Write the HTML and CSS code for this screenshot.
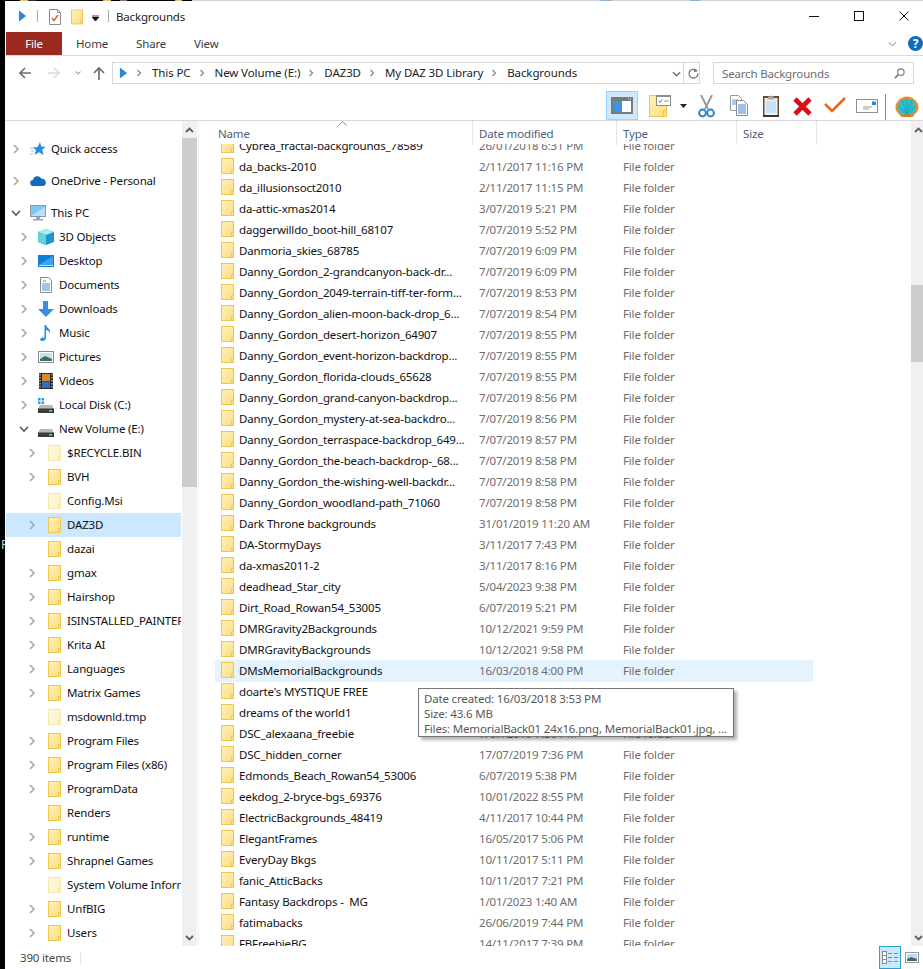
FILE: index.html
```html
<!DOCTYPE html>
<html lang="en">
<head>
<meta charset="utf-8">
<title>Backgrounds</title>
<link rel="stylesheet" href="styles.css">
</head>
<body>
<svg class="defs" aria-hidden="true">
  <defs>
    <linearGradient id="fg" x1="0" y1="0" x2="1" y2="1"><stop offset="0" stop-color="#fff0bd"/><stop offset="1" stop-color="#fedd7c"/></linearGradient>
    <symbol id="folder" viewBox="0 0 13 16">
      <rect x=".5" y=".5" width="12" height="15" fill="url(#fg)" stroke="#eec650"/>
      <path d="M10.5 15.5v-4h2" fill="none" stroke="#eec650"/>
    </symbol>
    <symbol id="chev-r" viewBox="0 0 10 10"><path d="M3 1l4 4-4 4" fill="none" stroke="#a6a6a6" stroke-width="1.6"/></symbol>
    <symbol id="chev-d" viewBox="0 0 10 10"><path d="M1 3l4 4 4-4" fill="none" stroke="#595959" stroke-width="1.6"/></symbol>
    <symbol id="crumb" viewBox="0 0 6 8"><path d="M1.5 1l3 3-3 3" fill="none" stroke="#8a8a8a" stroke-width="1.3"/></symbol>
    <symbol id="play" viewBox="0 0 10 12"><path d="M1 0l8 6-8 6z" fill="#2b88d8"/></symbol>
    <symbol id="star" viewBox="0 0 16 16"><path d="M10 1l1.300 4.500 4.500.3-3.500 3 1.200 5.200-4.500-2.800-4.500 2.800 1.500-5-3-2.500 4.600-.5z" fill="#2b8fe0"/><path d="M0 7h4M1 10h3M0 13h3" stroke="#9cc9ee"/></symbol>
    <symbol id="cloud" viewBox="0 0 16 11"><path d="M3.500 10.500a3 3 0 0 1-.5-6 4.500 4.500 0 0 1 8.500-1.200 3.600 3.600 0 0 1 4.300 3.900 3 3 0 0 1-2.300 3.300z" fill="#0f6cbd"/></symbol>
    <symbol id="pc" viewBox="0 0 16 16"><rect x=".5" y=".5" width="15" height="11" fill="#7fc7f5" stroke="#8a99a8"/><path d="M1 11L15 2v9z" fill="#b7e1fa"/><path d="M6 12h4v2H6zM3 14h10v1.500H3z" fill="#9aa5ae"/></symbol>
    <symbol id="cube" viewBox="0 0 16 16"><path d="M8 0l8 3v10l-8 3-8-3V3z" fill="#1e96c8"/><path d="M0 3l8 3 8-3-8-3z" fill="#a8ecec"/><path d="M0 3l8 3v10l-8-3z" fill="#62d3d8"/></symbol>
    <symbol id="desk" viewBox="0 0 16 12"><rect width="16" height="12" fill="#0f7fd6"/><path d="M1 10L15 1v9z" fill="#3fa3ec"/><path d="M1 10.500h14" stroke="#bfe3fb"/></symbol>
    <symbol id="docs" viewBox="0 0 12 16"><path d="M.5.500h8l3 3v12H.5z" fill="#fff" stroke="#8a8a8a"/><path d="M3 4h3M2 7h8M2 9h8M2 11h8M2 13h8" stroke="#3d8edb"/></symbol>
    <symbol id="down" viewBox="0 0 16 16"><path d="M5 0h5v8h6l-8 8-8-8h5z" fill="#3b8fdf"/></symbol>
    <symbol id="note" viewBox="0 0 12 16"><path d="M4.500 0h1.500c.5 3 5 3.500 4 8-1-2-2.500-3-4-3v8c0 2-2 3-4 3s-2.500-2-1-3 2.500-.5 3.500-.2z" fill="#1593e8"/></symbol>
    <symbol id="pics" viewBox="0 0 16 12"><rect x=".5" y=".5" width="15" height="11" fill="#fff" stroke="#8a8a8a"/><rect x="2" y="2" width="12" height="8" fill="#c6e0f3"/><path d="M2 8l5-3 7 3v2H2z" fill="#41705f"/></symbol>
    <symbol id="film" viewBox="0 0 14 16"><rect width="14" height="16" fill="#2b2b2b"/><rect x="3" y="1" width="8" height="7" fill="#d9882a"/><rect x="3" y="8.500" width="8" height="6.500" fill="#2f6fc0"/><path d="M1 1v14M13 1v14" stroke="#ddd" stroke-dasharray="1.500 1.500"/></symbol>
    <symbol id="disk" viewBox="0 0 16 8"><path d="M2 0h12l2 4H0z" fill="#b9b9b9"/><rect y="3.500" width="16" height="4.500" fill="#3c3c3c"/><rect x="11" y="5" width="3" height="1.500" fill="#6fdc6f"/></symbol>
    <symbol id="win" viewBox="0 0 6 6"><path d="M0 0h2.500v2.500H0zM3.500 0H6v2.500H3.500zM0 3.500h2.500V6H0zM3.500 3.500H6V6H3.500z" fill="#1ba1e2"/></symbol>
  </defs>
</svg>

<div class="shell">
  <span class="stray">P</span>
  <div class="window">
    <div class="strip"></div>

    <header class="titlebar">
      <svg class="qa-play"><use href="#play"/></svg>
      <span class="vsep"></span>
      <svg class="qa-doc" viewBox="0 0 12 16"><path d="M.5.500h8l3 3v12H.5z" fill="#fff" stroke="#8b8b8b"/><path d="M8.500.500v3h3" fill="none" stroke="#8b8b8b"/><path d="M3 9l2 2.500L9 6" fill="none" stroke="#e0622a" stroke-width="1.500"/></svg>
      <svg class="qa-folder"><use href="#folder"/></svg>
      <svg class="qa-drop" viewBox="0 0 7 6"><path d="M0 0h7M0 2h7L3.500 6z" stroke="#111" stroke-width=".8" fill="#111"/></svg>
      <span class="vsep second"></span>
      <span class="title">Backgrounds</span>
      <div class="winctl">
        <svg viewBox="0 0 10 10"><path d="M0 5.500h10" stroke="#111"/></svg>
        <svg viewBox="0 0 10 10"><rect x=".5" y=".5" width="9" height="9" fill="none" stroke="#111"/></svg>
        <svg viewBox="0 0 10 10"><path d="M.5.500l9 9M9.500.500l-9 9" stroke="#111"/></svg>
      </div>
    </header>

    <nav class="tabs">
      <span class="tab file">File</span>
      <span class="tab home">Home</span>
      <span class="tab share">Share</span>
      <span class="tab view">View</span>
      <svg class="rib-chev" viewBox="0 0 10 6"><path d="M1 1l4 4 4-4" fill="none" stroke="#a9a9a9" stroke-width="1.200"/></svg>
      <span class="help">?</span>
    </nav>

    <div class="addrbar">
      <svg class="nav-btn back" viewBox="0 0 12 12"><path d="M6 1L1 6l5 5M1 6h11" fill="none" stroke="#6d6d6d" stroke-width="1.600"/></svg>
      <svg class="nav-btn fwd" viewBox="0 0 12 12"><path d="M6 1l5 5-5 5M11 6H0" fill="none" stroke="#dcdcdc" stroke-width="1.600"/></svg>
      <svg class="nav-btn recent" viewBox="0 0 6 4"><path d="M.5.500L3 3 5.500.500" fill="none" stroke="#a9a9a9" stroke-width="1.100"/></svg>
      <svg class="nav-btn up" viewBox="0 0 12 13"><path d="M1 6l5-5 5 5M6 1v12" fill="none" stroke="#6d6d6d" stroke-width="1.700"/></svg>
      <div class="addr">
        <svg class="addr-play"><use href="#play"/></svg>
        <svg class="crumb c1"><use href="#crumb"/></svg><span class="seg">This PC</span>
        <svg class="crumb"><use href="#crumb"/></svg><span class="seg">New Volume (E:)</span>
        <svg class="crumb"><use href="#crumb"/></svg><span class="seg">DAZ3D</span>
        <svg class="crumb"><use href="#crumb"/></svg><span class="seg">My DAZ 3D Library</span>
        <svg class="crumb"><use href="#crumb"/></svg><span class="seg">Backgrounds</span>
        <svg class="addr-drop" viewBox="0 0 10 6"><path d="M1 1l4 4 4-4" fill="none" stroke="#6d6d6d" stroke-width="1.500"/></svg>
        <span class="addr-sep"></span>
        <svg class="refresh" viewBox="0 0 12 12"><path d="M9.800 3.200A4.800 4.800 0 1 0 10.800 6" fill="none" stroke="#6d6d6d" stroke-width="1.300"/><path d="M6.500 0v4h3.500z" fill="#6d6d6d"/></svg>
      </div>
      <div class="search">
        <span>Search Backgrounds</span>
        <svg viewBox="0 0 12 12"><circle cx="7.500" cy="4.500" r="3.500" fill="none" stroke="#777" stroke-width="1.200"/><path d="M5 7l-4 4" stroke="#777" stroke-width="1.800"/></svg>
      </div>
    </div>

    <div class="toolbar">
      <div class="tb-sel">
        <svg viewBox="0 0 22 17"><rect width="22" height="17" fill="#7a7a7a"/><rect x="2" y="4" width="9" height="11" fill="#3f93e0"/><rect x="11" y="4" width="9" height="11" fill="#fff"/><path d="M17 2h1M19 2h1" stroke="#ddd"/></svg>
      </div>
      <svg class="tb-fold" viewBox="0 0 22 22"><rect x=".5" y=".5" width="17" height="21" fill="url(#fg)" stroke="#eec650"/><path d="M14.500 21.500v-6h3" fill="none" stroke="#eec650"/><rect x="7.500" y=".5" width="14" height="10" fill="#fff" stroke="#8b8b8b"/><path d="M7 0h15v2H7z" fill="#8b8b8b"/><path d="M9.500 6l1.500 1.500L13 4.500" fill="none" stroke="#2b88d8"/><path d="M15 6h5" stroke="#999"/></svg>
      <svg class="tb-drop" viewBox="0 0 7 4"><path d="M0 0h7L3.500 4z" fill="#222"/></svg>
      <svg class="tb-cut" viewBox="0 0 17 23"><path d="M3 0l7 14M14 0L7 14" stroke="#9a9a9a" stroke-width="2"/><circle cx="4.500" cy="18" r="3.400" fill="none" stroke="#2a86d0" stroke-width="2"/><circle cx="12.500" cy="18" r="3.400" fill="none" stroke="#2a86d0" stroke-width="2"/></svg>
      <svg class="tb-copy" viewBox="0 0 18 21"><path d="M.5.500h8l3 3v12H.5z" fill="#fff" stroke="#9a9a9a"/><path d="M2 5h6M2 7h7M2 9h7" stroke="#5b94d8"/><path d="M6.500 5.500h7l4 4v11h-11z" fill="#fff" stroke="#8b8b8b"/><path d="M8 10h8M8 12h8M8 14h8M8 16h8M8 18h8" stroke="#3d7fd6"/></svg>
      <svg class="tb-paste" viewBox="0 0 16 22"><rect width="16" height="21" y="1" fill="#6b4a2e"/><path d="M0 20h16v2H0z" fill="#4a3220"/><rect x="1.500" y="3" width="13" height="17" fill="#e6f2fb"/><path d="M3 7h10M3 9h10M3 11h10M3 13h10M3 15h10M3 17h10" stroke="#a9cfee"/><path d="M5 3V1.500h2L8 0l1 1.500h2V3l1 1.500H4z" fill="#a9a9a9"/></svg>
      <svg class="tb-del" viewBox="0 0 19 19"><path d="M2 2l15 15M17 2L2 17" stroke="#e00b16" stroke-width="4.600"/></svg>
      <svg class="tb-ok" viewBox="0 0 22 16"><path d="M1 7l7 7L21 1" fill="none" stroke="#f0651a" stroke-width="2.600"/></svg>
      <svg class="tb-mail" viewBox="0 0 22 14"><rect x=".5" y=".5" width="21" height="13" fill="#fff" stroke="#8f8f8f"/><rect x="16" y="2.500" width="4" height="3.500" fill="#2b88d8"/><path d="M7 8h9M7 10h6" stroke="#9a9a9a"/></svg>
      <span class="tb-sep"></span>
      <svg class="tb-shell" viewBox="0 0 24 22"><path d="M6 21l-2-3C0 15-1 9 3 5c5-6 13-6 18 0 4 4 3 10-1 13l-2 3z" fill="#f08a24"/><path d="M6.500 18.500C2.500 15 1.500 10 4.500 6.500c4-5 11-5 15 0 3 3.500 2 8.500-2 12z" fill="#2cc0cc"/><path d="M12 18L7 4M12 18L3.500 10M12 18L12 3M12 18L17 4M12 18L20.500 10" stroke="#1a97a8" stroke-width=".7"/><path d="M8 18.500h8V21H8z" fill="#d9762a"/></svg>
    </div>

    <main class="main">
      <aside class="nav">
        <div class="tree">
          <div class="node d0"><svg class="chev"><use href="#chev-r"/></svg><svg class="ico"><use href="#star"/></svg><span>Quick access</span></div>
          <div class="node d0 gap"><svg class="chev"><use href="#chev-r"/></svg><svg class="ico"><use href="#cloud"/></svg><span>OneDrive - Personal</span></div>
          <div class="node d0 gap"><svg class="chev"><use href="#chev-d"/></svg><svg class="ico"><use href="#pc"/></svg><span>This PC</span></div>
          <div class="node d1"><svg class="chev"><use href="#chev-r"/></svg><svg class="ico"><use href="#cube"/></svg><span>3D Objects</span></div>
          <div class="node d1"><svg class="chev"><use href="#chev-r"/></svg><svg class="ico"><use href="#desk"/></svg><span>Desktop</span></div>
          <div class="node d1"><svg class="chev"><use href="#chev-r"/></svg><svg class="ico"><use href="#docs"/></svg><span>Documents</span></div>
          <div class="node d1"><svg class="chev"><use href="#chev-r"/></svg><svg class="ico"><use href="#down"/></svg><span>Downloads</span></div>
          <div class="node d1"><svg class="chev"><use href="#chev-r"/></svg><svg class="ico"><use href="#note"/></svg><span>Music</span></div>
          <div class="node d1"><svg class="chev"><use href="#chev-r"/></svg><svg class="ico"><use href="#pics"/></svg><span>Pictures</span></div>
          <div class="node d1"><svg class="chev"><use href="#chev-r"/></svg><svg class="ico"><use href="#film"/></svg><span>Videos</span></div>
          <div class="node d1"><svg class="chev"><use href="#chev-r"/></svg><span class="drive"><svg class="winflag"><use href="#win"/></svg><svg class="drive-body"><use href="#disk"/></svg></span><span>Local Disk (C:)</span></div>
          <div class="node d1"><svg class="chev"><use href="#chev-d"/></svg><span class="drive"><svg class="drive-body"><use href="#disk"/></svg></span><span>New Volume (E:)</span></div>
          <div class="node d2"><svg class="chev"><use href="#chev-r"/></svg><svg class="ico faded"><use href="#folder"/></svg><span>$RECYCLE.BIN</span></div>
          <div class="node d2"><svg class="chev"><use href="#chev-r"/></svg><svg class="ico"><use href="#folder"/></svg><span>BVH</span></div>
          <div class="node d2"><span class="chev"></span><svg class="ico faded"><use href="#folder"/></svg><span>Config.Msi</span></div>
          <div class="node d2 selected"><svg class="chev"><use href="#chev-r"/></svg><svg class="ico"><use href="#folder"/></svg><span>DAZ3D</span></div>
          <div class="node d2"><span class="chev"></span><svg class="ico"><use href="#folder"/></svg><span>dazai</span></div>
          <div class="node d2"><svg class="chev"><use href="#chev-r"/></svg><svg class="ico"><use href="#folder"/></svg><span>gmax</span></div>
          <div class="node d2"><svg class="chev"><use href="#chev-r"/></svg><svg class="ico"><use href="#folder"/></svg><span>Hairshop</span></div>
          <div class="node d2"><svg class="chev"><use href="#chev-r"/></svg><svg class="ico"><use href="#folder"/></svg><span>ISINSTALLED_PAINTER</span></div>
          <div class="node d2"><svg class="chev"><use href="#chev-r"/></svg><svg class="ico"><use href="#folder"/></svg><span>Krita AI</span></div>
          <div class="node d2"><svg class="chev"><use href="#chev-r"/></svg><svg class="ico"><use href="#folder"/></svg><span>Languages</span></div>
          <div class="node d2"><svg class="chev"><use href="#chev-r"/></svg><svg class="ico"><use href="#folder"/></svg><span>Matrix Games</span></div>
          <div class="node d2"><span class="chev"></span><svg class="ico faded"><use href="#folder"/></svg><span>msdownld.tmp</span></div>
          <div class="node d2"><svg class="chev"><use href="#chev-r"/></svg><svg class="ico"><use href="#folder"/></svg><span>Program Files</span></div>
          <div class="node d2"><svg class="chev"><use href="#chev-r"/></svg><svg class="ico"><use href="#folder"/></svg><span>Program Files (x86)</span></div>
          <div class="node d2"><svg class="chev"><use href="#chev-r"/></svg><svg class="ico"><use href="#folder"/></svg><span>ProgramData</span></div>
          <div class="node d2"><span class="chev"></span><svg class="ico"><use href="#folder"/></svg><span>Renders</span></div>
          <div class="node d2"><svg class="chev"><use href="#chev-r"/></svg><svg class="ico"><use href="#folder"/></svg><span>runtime</span></div>
          <div class="node d2"><svg class="chev"><use href="#chev-r"/></svg><svg class="ico"><use href="#folder"/></svg><span>Shrapnel Games</span></div>
          <div class="node d2"><span class="chev"></span><svg class="ico faded"><use href="#folder"/></svg><span>System Volume Information</span></div>
          <div class="node d2"><svg class="chev"><use href="#chev-r"/></svg><svg class="ico"><use href="#folder"/></svg><span>UnfBIG</span></div>
          <div class="node d2"><svg class="chev"><use href="#chev-r"/></svg><svg class="ico"><use href="#folder"/></svg><span>Users</span></div>
        </div>
        <div class="vscroll wide">
          <svg class="sb-arrow" viewBox="0 0 9 6"><path d="M1 5l3.500-3.500L8 5" fill="none" stroke="#606060" stroke-width="1.800"/></svg>
          <div class="thumb nav-thumb"></div>
          <svg class="sb-arrow end" viewBox="0 0 9 6"><path d="M1 1l3.500 3.500L8 1" fill="none" stroke="#606060" stroke-width="1.800"/></svg>
        </div>
      </aside>

      <section class="files">
        <div class="colhead">
          <svg class="sort" viewBox="0 0 9 5"><path d="M.5 4.500l4-4 4 4" fill="none" stroke="#8a8a8a"/></svg>
          <span class="col c-name">Name</span>
          <span class="col c-date">Date modified</span>
          <span class="col c-type">Type</span>
          <span class="col c-size">Size</span>
        </div>
        <div class="rows">
          <div class="rows-inner">
            <div class="row"><svg class="fico"><use href="#folder"/></svg><span class="name">Cybrea_fractal-backgrounds_78589</span><span class="date">26/01/2018 6:31 PM</span><span class="type">File folder</span></div>
            <div class="row"><svg class="fico"><use href="#folder"/></svg><span class="name">da_backs-2010</span><span class="date">2/11/2017 11:16 PM</span><span class="type">File folder</span></div>
            <div class="row"><svg class="fico"><use href="#folder"/></svg><span class="name">da_illusionsoct2010</span><span class="date">2/11/2017 11:15 PM</span><span class="type">File folder</span></div>
            <div class="row"><svg class="fico"><use href="#folder"/></svg><span class="name">da-attic-xmas2014</span><span class="date">3/07/2019 5:21 PM</span><span class="type">File folder</span></div>
            <div class="row"><svg class="fico"><use href="#folder"/></svg><span class="name">daggerwilldo_boot-hill_68107</span><span class="date">7/07/2019 5:52 PM</span><span class="type">File folder</span></div>
            <div class="row"><svg class="fico"><use href="#folder"/></svg><span class="name">Danmoria_skies_68785</span><span class="date">7/07/2019 6:09 PM</span><span class="type">File folder</span></div>
            <div class="row"><svg class="fico"><use href="#folder"/></svg><span class="name">Danny_Gordon_2-grandcanyon-back-dr...</span><span class="date">7/07/2019 6:09 PM</span><span class="type">File folder</span></div>
            <div class="row"><svg class="fico"><use href="#folder"/></svg><span class="name">Danny_Gordon_2049-terrain-tiff-ter-form...</span><span class="date">7/07/2019 8:53 PM</span><span class="type">File folder</span></div>
            <div class="row"><svg class="fico"><use href="#folder"/></svg><span class="name">Danny_Gordon_alien-moon-back-drop_6...</span><span class="date">7/07/2019 8:54 PM</span><span class="type">File folder</span></div>
            <div class="row"><svg class="fico"><use href="#folder"/></svg><span class="name">Danny_Gordon_desert-horizon_64907</span><span class="date">7/07/2019 8:55 PM</span><span class="type">File folder</span></div>
            <div class="row"><svg class="fico"><use href="#folder"/></svg><span class="name">Danny_Gordon_event-horizon-backdrop...</span><span class="date">7/07/2019 8:55 PM</span><span class="type">File folder</span></div>
            <div class="row"><svg class="fico"><use href="#folder"/></svg><span class="name">Danny_Gordon_florida-clouds_65628</span><span class="date">7/07/2019 8:55 PM</span><span class="type">File folder</span></div>
            <div class="row"><svg class="fico"><use href="#folder"/></svg><span class="name">Danny_Gordon_grand-canyon-backdrop...</span><span class="date">7/07/2019 8:56 PM</span><span class="type">File folder</span></div>
            <div class="row"><svg class="fico"><use href="#folder"/></svg><span class="name">Danny_Gordon_mystery-at-sea-backdro...</span><span class="date">7/07/2019 8:56 PM</span><span class="type">File folder</span></div>
            <div class="row"><svg class="fico"><use href="#folder"/></svg><span class="name">Danny_Gordon_terraspace-backdrop_649...</span><span class="date">7/07/2019 8:57 PM</span><span class="type">File folder</span></div>
            <div class="row"><svg class="fico"><use href="#folder"/></svg><span class="name">Danny_Gordon_the-beach-backdrop-_68...</span><span class="date">7/07/2019 8:58 PM</span><span class="type">File folder</span></div>
            <div class="row"><svg class="fico"><use href="#folder"/></svg><span class="name">Danny_Gordon_the-wishing-well-backdr...</span><span class="date">7/07/2019 8:58 PM</span><span class="type">File folder</span></div>
            <div class="row"><svg class="fico"><use href="#folder"/></svg><span class="name">Danny_Gordon_woodland-path_71060</span><span class="date">7/07/2019 8:58 PM</span><span class="type">File folder</span></div>
            <div class="row"><svg class="fico"><use href="#folder"/></svg><span class="name">Dark Throne backgrounds</span><span class="date">31/01/2019 11:20 AM</span><span class="type">File folder</span></div>
            <div class="row"><svg class="fico"><use href="#folder"/></svg><span class="name">DA-StormyDays</span><span class="date">3/11/2017 7:43 PM</span><span class="type">File folder</span></div>
            <div class="row"><svg class="fico"><use href="#folder"/></svg><span class="name">da-xmas2011-2</span><span class="date">3/11/2017 8:16 PM</span><span class="type">File folder</span></div>
            <div class="row"><svg class="fico"><use href="#folder"/></svg><span class="name">deadhead_Star_city</span><span class="date">5/04/2023 9:38 PM</span><span class="type">File folder</span></div>
            <div class="row"><svg class="fico"><use href="#folder"/></svg><span class="name">Dirt_Road_Rowan54_53005</span><span class="date">6/07/2019 5:21 PM</span><span class="type">File folder</span></div>
            <div class="row"><svg class="fico"><use href="#folder"/></svg><span class="name">DMRGravity2Backgrounds</span><span class="date">10/12/2021 9:59 PM</span><span class="type">File folder</span></div>
            <div class="row"><svg class="fico"><use href="#folder"/></svg><span class="name">DMRGravityBackgrounds</span><span class="date">10/12/2021 9:58 PM</span><span class="type">File folder</span></div>
            <div class="row hover"><svg class="fico"><use href="#folder"/></svg><span class="name">DMsMemorialBackgrounds</span><span class="date">16/03/2018 4:00 PM</span><span class="type">File folder</span></div>
            <div class="row"><svg class="fico"><use href="#folder"/></svg><span class="name">doarte's MYSTIQUE FREE</span><span class="date">1/11/2017 8:01 PM</span><span class="type">File folder</span></div>
            <div class="row"><svg class="fico"><use href="#folder"/></svg><span class="name">dreams of the world1</span><span class="date">3/11/2017 8:05 PM</span><span class="type">File folder</span></div>
            <div class="row"><svg class="fico"><use href="#folder"/></svg><span class="name">DSC_alexaana_freebie</span><span class="date">7/07/2019 7:30 PM</span><span class="type">File folder</span></div>
            <div class="row"><svg class="fico"><use href="#folder"/></svg><span class="name">DSC_hidden_corner</span><span class="date">17/07/2019 7:36 PM</span><span class="type">File folder</span></div>
            <div class="row"><svg class="fico"><use href="#folder"/></svg><span class="name">Edmonds_Beach_Rowan54_53006</span><span class="date">6/07/2019 5:38 PM</span><span class="type">File folder</span></div>
            <div class="row"><svg class="fico"><use href="#folder"/></svg><span class="name">eekdog_2-bryce-bgs_69376</span><span class="date">10/01/2022 8:55 PM</span><span class="type">File folder</span></div>
            <div class="row"><svg class="fico"><use href="#folder"/></svg><span class="name">ElectricBackgrounds_48419</span><span class="date">4/11/2017 10:44 PM</span><span class="type">File folder</span></div>
            <div class="row"><svg class="fico"><use href="#folder"/></svg><span class="name">ElegantFrames</span><span class="date">16/05/2017 5:06 PM</span><span class="type">File folder</span></div>
            <div class="row"><svg class="fico"><use href="#folder"/></svg><span class="name">EveryDay Bkgs</span><span class="date">10/11/2017 5:11 PM</span><span class="type">File folder</span></div>
            <div class="row"><svg class="fico"><use href="#folder"/></svg><span class="name">fanic_AtticBacks</span><span class="date">10/11/2017 7:21 PM</span><span class="type">File folder</span></div>
            <div class="row"><svg class="fico"><use href="#folder"/></svg><span class="name">Fantasy Backdrops -&nbsp; MG</span><span class="date">1/01/2023 1:40 AM</span><span class="type">File folder</span></div>
            <div class="row"><svg class="fico"><use href="#folder"/></svg><span class="name">fatimabacks</span><span class="date">26/06/2019 7:44 PM</span><span class="type">File folder</span></div>
            <div class="row"><svg class="fico"><use href="#folder"/></svg><span class="name">FBFreebieBG</span><span class="date">14/11/2017 7:39 PM</span><span class="type">File folder</span></div>
          </div>
        </div>
        <div class="tooltip">
          <div>Date created: 16/03/2018 3:53 PM</div>
          <div>Size: 43.6 MB</div>
          <div>Files: MemorialBack01 24x16.png, MemorialBack01.jpg, ...</div>
        </div>
      </section>

      <div class="vscroll narrow">
        <svg class="sb-arrow" viewBox="0 0 9 6"><path d="M1 5l3.500-3.500L8 5" fill="none" stroke="#606060" stroke-width="1.800"/></svg>
        <div class="thumb list-thumb"></div>
        <svg class="sb-arrow end" viewBox="0 0 9 6"><path d="M1 1l3.500 3.500L8 1" fill="none" stroke="#606060" stroke-width="1.800"/></svg>
      </div>
    </main>

    <footer class="status">
      <span class="count">390 items</span>
      <span class="st-sep"></span>
      <div class="views">
        <div class="view-btn active">
          <svg viewBox="0 0 16 13"><rect x=".5" y=".5" width="4" height="4" fill="#fff" stroke="#8a8a8a"/><rect x=".5" y="4.500" width="4" height="4" fill="#fff" stroke="#8a8a8a"/><rect x=".5" y="8.500" width="4" height="4" fill="#fff" stroke="#8a8a8a"/><path d="M6 2.500h4M12 2.500h4M6 6.500h4M12 6.500h4M6 10.500h4M12 10.500h4" stroke="#8a8a8a"/></svg>
        </div>
        <svg class="view-thumb" viewBox="0 0 14 11"><rect x=".5" y=".5" width="13" height="10" fill="#fff" stroke="#9a9a9a"/><rect x="2" y="2" width="10" height="7" fill="#bcdcf3"/><path d="M2 7l4-2 6 2v2H2z" fill="#41705f"/></svg>
      </div>
    </footer>
  </div>
</div>
</body>
</html>
```

FILE: styles.css
```css
* { box-sizing: border-box; }
html, body { margin: 0; padding: 0; }
body {
  width: 923px;
  height: 969px;
  overflow: hidden;
  font-family: "Noto Sans", "Open Sans", sans-serif;
  font-size: 11.5px;
  letter-spacing: -.17px;
  color: #000;
  background: #000;
}
svg { display: block; flex: none; }
.defs { width: 0; height: 0; }

.shell { display: flex; height: 969px; position: relative; }
.stray {
  position: absolute; left: 1px; top: 537px; width: 5px; overflow: hidden;
  color: #ccc; font-size: 12px; line-height: 16px;
}
.window {
  margin-left: 5px; width: 918px; height: 969px;
  display: flex; flex-direction: column; background: #fff;
  position: relative;
}
.strip {
  height: 1px; margin-left: -5px; flex: none; width: 923px;
  background: linear-gradient(90deg,
    #000 20px, #e5c877 20px 28px, #333 28px 36px, #000 36px 103px,
    #e5c877 103px 111px, #000 111px 120px, #777 120px 127px, #000 127px 175px,
    #e5c877 175px 182px, #000 182px 192px, #d4d4d4 192px 600px, #8fb3d0 600px 612px,
    #d4d4d4 612px 690px, #8fb3d0 690px 700px, #d4d4d4 700px);
}

/* Title bar */
.titlebar { height: 31px; flex: none; display: flex; align-items: center; padding-left: 13px; }
.qa-play { width: 9px; height: 12px; margin-top: -1px; }
.vsep { width: 1px; height: 12px; background: #a9a9a9; margin-left: 10px; margin-top: -1px; }
.qa-doc { width: 12px; height: 16px; margin-left: 11px; margin-top: 1px; }
.qa-folder { width: 12px; height: 16px; margin-left: 10px; margin-top: 1px; }
.qa-drop { width: 7px; height: 6px; margin-left: 9px; margin-top: 2px; }
.vsep.second { margin-left: 9px; }
.title { margin-left: 7px; margin-top: 1px; line-height: 16px; color: #222; }
.winctl { margin-left: auto; display: flex; gap: 35px; padding-right: 14px; margin-top: -1px; }
.winctl svg { width: 10px; height: 10px; }

/* Ribbon tabs */
.tabs {
  height: 24px; flex: none; display: flex; align-items: center;
  border-bottom: 1px solid #dadbdc; color: #3b3b3b; position: relative;
}
.tab { line-height: 16px; }
.file {
  width: 56px; height: 23px; margin-left: 1px; background: #9b2a20; color: #fff;
  display: flex; align-items: center; justify-content: center;
}
.home { margin-left: 14px; }
.share { margin-left: 28px; }
.view { margin-left: 28px; }
.rib-chev { width: 9px; height: 6px; margin-left: auto; }
.help {
  width: 15px; height: 15px; border-radius: 50%; background: #0f6cbd; color: #fff;
  font-weight: 700; font-size: 12px; line-height: 15px; text-align: center;
  margin-left: 11px;
}

/* Address bar */
.addrbar { height: 34px; flex: none; display: flex; align-items: flex-start; padding-top: 6px; }
.nav-btn { margin-top: 5px; }
.back { width: 12px; height: 12px; margin-left: 14px; }
.fwd { width: 12px; height: 12px; margin-left: 17px; }
.recent { width: 6px; height: 4px; margin-left: 15px; margin-top: 9px; }
.up { width: 12px; height: 13px; margin-left: 12px; }
.addr {
  width: 588px; height: 22px; margin-left: 7px; border: 1px solid #d9d9d9;
  display: flex; align-items: center; color: #222; position: relative;
}
.addr-play { width: 9px; height: 12px; margin-left: 6px; }
.crumb { width: 6px; height: 8px; margin: 0 10px 0 8px; }
.crumb.c1 { margin-left: 8px; margin-right: 10px; }
.seg { line-height: 16px; white-space: nowrap; letter-spacing: -.1px; }
.addr-drop { width: 9px; height: 6px; position: absolute; left: 559px; top: 8px; }
.addr-sep { position: absolute; left: 570px; top: 0; width: 1px; height: 20px; background: #d9d9d9; }
.refresh { width: 11px; height: 11px; position: absolute; left: 575px; top: 5px; }
.search {
  width: 201px; height: 22px; margin-left: 13px; border: 1px solid #d9d9d9;
  display: flex; align-items: center; justify-content: space-between;
  padding: 0 8px; color: #6d6d6d;
}
.search svg { width: 11px; height: 11px; }

/* Command toolbar */
.toolbar {
  height: 31px; flex: none; border-bottom: 1px solid #d9d9d9;
  display: flex; align-items: flex-start; padding-top: 1px;
}
.tb-sel {
  width: 32px; height: 29px; margin-left: 601px; background: #cce8ff; border: 1px solid #99d1ff;
  display: flex; align-items: center; justify-content: center;
}
.tb-sel svg { width: 22px; height: 17px; }
.tb-fold { width: 22px; height: 22px; margin: 4px 0 0 11px; }
.tb-drop { width: 7px; height: 4px; margin: 13px 0 0 9px; }
.tb-cut { width: 17px; height: 23px; margin: 4px 0 0 11px; }
.tb-copy { width: 18px; height: 21px; margin: 4px 0 0 15px; }
.tb-paste { width: 16px; height: 22px; margin: 4px 0 0 15px; }
.tb-del { width: 19px; height: 19px; margin: 6px 0 0 14px; }
.tb-ok { width: 22px; height: 16px; margin: 6px 0 0 12px; }
.tb-mail { width: 22px; height: 14px; margin: 8px 0 0 10px; }
.tb-sep { width: 1px; height: 26px; background: #8a8a8a; margin: 3px 0 0 7px; }
.tb-shell { width: 24px; height: 22px; margin: 5px 0 0 9px; }

/* Main */
.main { flex: 1; min-height: 0; display: flex; }

.nav { width: 193px; flex: none; display: flex; padding-left: 1px; }
.tree { width: 175px; flex: none; padding-top: 16px; overflow: hidden; }
.node {
  height: 24px; display: flex; align-items: center; white-space: nowrap;
  overflow: hidden; color: #111; line-height: 16px;
}
.node.gap { margin-top: 8px; }
.node.d0 { padding-left: 5px; }
.node.d1 { padding-left: 13px; }
.node.d2 { padding-left: 21px; }
.node.selected { background: #cce8ff; }
.chev { width: 10px; height: 10px; margin-right: 9px; flex: none; }
.ico { width: 16px; height: 16px; margin-right: 5px; }
.d2 .chev { margin-right: 11px; }
.d2 .ico { width: 13px; height: 16px; margin-right: 6px; }
.faded { opacity: .45; }
.drive {
  width: 16px; height: 16px; margin-right: 5px; flex: none;
  display: flex; flex-direction: column; justify-content: flex-end;
}
.winflag { width: 6px; height: 6px; margin-bottom: 1px; }
.drive-body { width: 16px; height: 8px; }

.vscroll { flex: none; background: #f0f0f0; display: flex; flex-direction: column; align-items: center; padding-top: 6px; padding-bottom: 5px; }
.vscroll.wide { width: 15px; margin-left: 1px; }
.vscroll.narrow { width: 12px; align-items: flex-start; padding-left: 3px; }
.sb-arrow { width: 9px; height: 6px; flex: none; }
.sb-arrow.end { margin-top: auto; }
.thumb { background: #cdcdcd; flex: none; }
.nav-thumb { width: 100%; height: 349px; margin-top: 5px; }
.list-thumb { width: 12px; margin-left: -3px; height: 77px; margin-top: 152px; }

/* File list */
.files { flex: 1; min-width: 0; display: flex; flex-direction: column; border-left: 1px solid #f0f0f0; position: relative; }
.colhead { height: 23px; flex: none; position: relative; color: #4c607a; }
.sort { width: 9px; height: 5px; position: absolute; left: 139px; top: 0; }
.col { position: absolute; top: 5px; line-height: 16px; }
.col::after { content: ""; position: absolute; top: -5px; width: 1px; height: 24px; background: #e5e5e5; }
.c-name { left: 19px; }
.c-name::after { left: 254px; }
.c-date { left: 280px; }
.c-date::after { left: 137px; }
.c-type { left: 424px; }
.c-type::after { left: 113px; }
.c-size { left: 544px; }
.c-size::after { left: 73px; }

.rows { flex: 1; min-height: 0; overflow: hidden; padding-left: 16px; }
.rows-inner { margin-top: -9px; width: 598px; }
.row { height: 21px; position: relative; white-space: nowrap; line-height: 21px; }
.row > span { position: absolute; top: 0; }
.row.hover { background: #e5f3ff; box-shadow: 0 1px 0 #e5f3ff; }
.fico { width: 13px; height: 16px; position: absolute; left: 6px; top: 2px; }
.name { left: 24px; color: #111; }
.date { left: 264px; color: #6d6d6d; }
.type { left: 408px; color: #6d6d6d; }

.tooltip {
  position: absolute; left: 219px; top: 567px; width: 316px; height: 49px;
  background: #fff; border: 1px solid #767676; color: #575757;
  padding: 2px 5px; line-height: 15px; white-space: nowrap;
  box-shadow: 3px 3px 3px rgba(0, 0, 0, .3);
}

/* Status bar */
.status { height: 23px; flex: none; display: flex; align-items: center; color: #444; position: relative; }
.count { margin-left: 15px; width: 60px; line-height: 16px; }
.st-sep { width: 1px; height: 12px; background: #e5e5e5; }
.views { margin-left: auto; display: flex; align-items: center; gap: 4px; padding-right: 4px; }
.view-btn {
  width: 22px; height: 23px; background: #cce8ff; border: 1px solid #26a0da;
  display: flex; align-items: center; justify-content: center;
}
.view-btn svg { width: 16px; height: 13px; }
.view-thumb { width: 14px; height: 11px; }
```
